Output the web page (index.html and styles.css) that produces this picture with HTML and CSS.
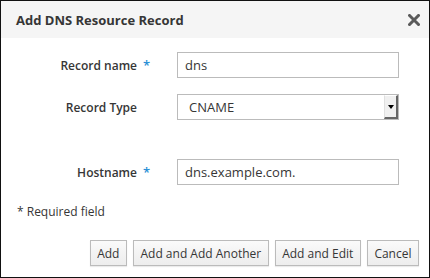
FILE: index.html
```html
<!DOCTYPE html>
<html lang="en">
<head>
    <meta charset="UTF-8">
    <meta name="viewport" content="width=device-width, initial-scale=1.0">
    <title>Add DNS Resource Record</title>
    <link rel="stylesheet" href="styles.css">
</head>
<body>
    <div class="modal">
        <div class="modal-header">
            <h4 class="modal-title">Add DNS Resource Record</h4>
            <svg class="close" width="12" height="12" viewBox="0 0 12 12">
                <path d="M1.5 1.5 L10.5 10.5 M10.5 1.5 L1.5 10.5" stroke="#5a5a5a" stroke-width="3" stroke-linecap="square"/>
            </svg>
        </div>

        <div class="modal-body">
            <div class="form-row">
                <label class="field-label">Record name</label>
                <span class="req">*</span>
                <input class="field-input" type="text" value="dns">
            </div>
            <div class="form-row">
                <label class="field-label">Record Type</label>
                <span class="req"></span>
                <div class="select-box">
                    <span class="select-value">CNAME</span>
                    <span class="select-arrow"></span>
                </div>
            </div>
            <div class="form-row form-row-gap">
                <label class="field-label">Hostname</label>
                <span class="req">*</span>
                <input class="field-input" type="text" value="dns.example.com.">
            </div>
            <p class="required-note">* Required field</p>
        </div>

        <div class="modal-footer">
            <button class="btn">Add</button>
            <button class="btn">Add and Add Another</button>
            <button class="btn">Add and Edit</button>
            <button class="btn">Cancel</button>
        </div>
    </div>
</body>
</html>
```

FILE: styles.css
```css
* {
    box-sizing: border-box;
}
body {
    margin: 0;
    font-family: 'Open Sans', 'Noto Sans', sans-serif;
    font-size: 13px;
    color: #363636;
    background: #fff;
}
.modal {
    width: 430px;
    height: 278px;
    border: 1px solid #111;
    display: flex;
    flex-direction: column;
}
.modal-header {
    height: 37px;
    background: #f5f5f5;
    display: flex;
    align-items: center;
    justify-content: space-between;
    padding: 0 9px 0 15px;
}
.modal-title {
    margin: 0;
    font-size: 13px;
    font-weight: 700;
    color: #363636;
}
.close {
    display: block;
    margin-top: 1px;
}
.modal-body {
    flex: 1;
    display: flex;
    flex-direction: column;
    padding: 14px 0 0 0;
}
.form-row {
    display: grid;
    grid-template-columns: 136px 40px 222px;
    align-items: center;
}
.form-row + .form-row {
    margin-top: 16px;
}
.form-row.form-row-gap {
    margin-top: 39px;
}
.field-label {
    font-size: 12px;
    font-weight: 600;
    text-align: right;
}
.req {
    color: #2b8fd6;
    padding-left: 6px;
    font-size: 13px;
    font-weight: 600;
}
.field-input {
    height: 26px;
    width: 222px;
    border: 1px solid #bbb;
    padding: 0 7px;
    font-family: inherit;
    font-size: 13px;
    color: #363636;
    outline: none;
}
.select-box {
    height: 26px;
    width: 222px;
    border: 1px solid #bbb;
    display: flex;
    align-items: center;
    justify-content: space-between;
    padding-left: 11px;
}
.select-arrow {
    width: 14px;
    height: 24px;
    border-left: 1px solid #e0e0e0;
    border-top: 1px solid #fff;
    border-right: 2px solid #666;
    border-bottom: 2px solid #666;
    background: #f0f0f0;
    position: relative;
}
.select-arrow::after {
    content: "";
    position: absolute;
    left: 3px;
    top: 9px;
    border-left: 3px solid transparent;
    border-right: 3px solid transparent;
    border-top: 4px solid #000;
}
.required-note {
    margin: 18px 0 0 16px;
    font-size: 12px;
}
.modal-footer {
    display: flex;
    justify-content: flex-end;
    gap: 6px;
    padding: 0 10px 11px 0;
}
.btn {
    height: 26px;
    padding: 0 6.5px;
    font-family: inherit;
    font-size: 12px;
    color: #363636;
    background: linear-gradient(#fafafa, #ededed);
    border: 1px solid #bbb;
    box-shadow: 0 1px 1px rgba(0,0,0,0.08);
}
```
